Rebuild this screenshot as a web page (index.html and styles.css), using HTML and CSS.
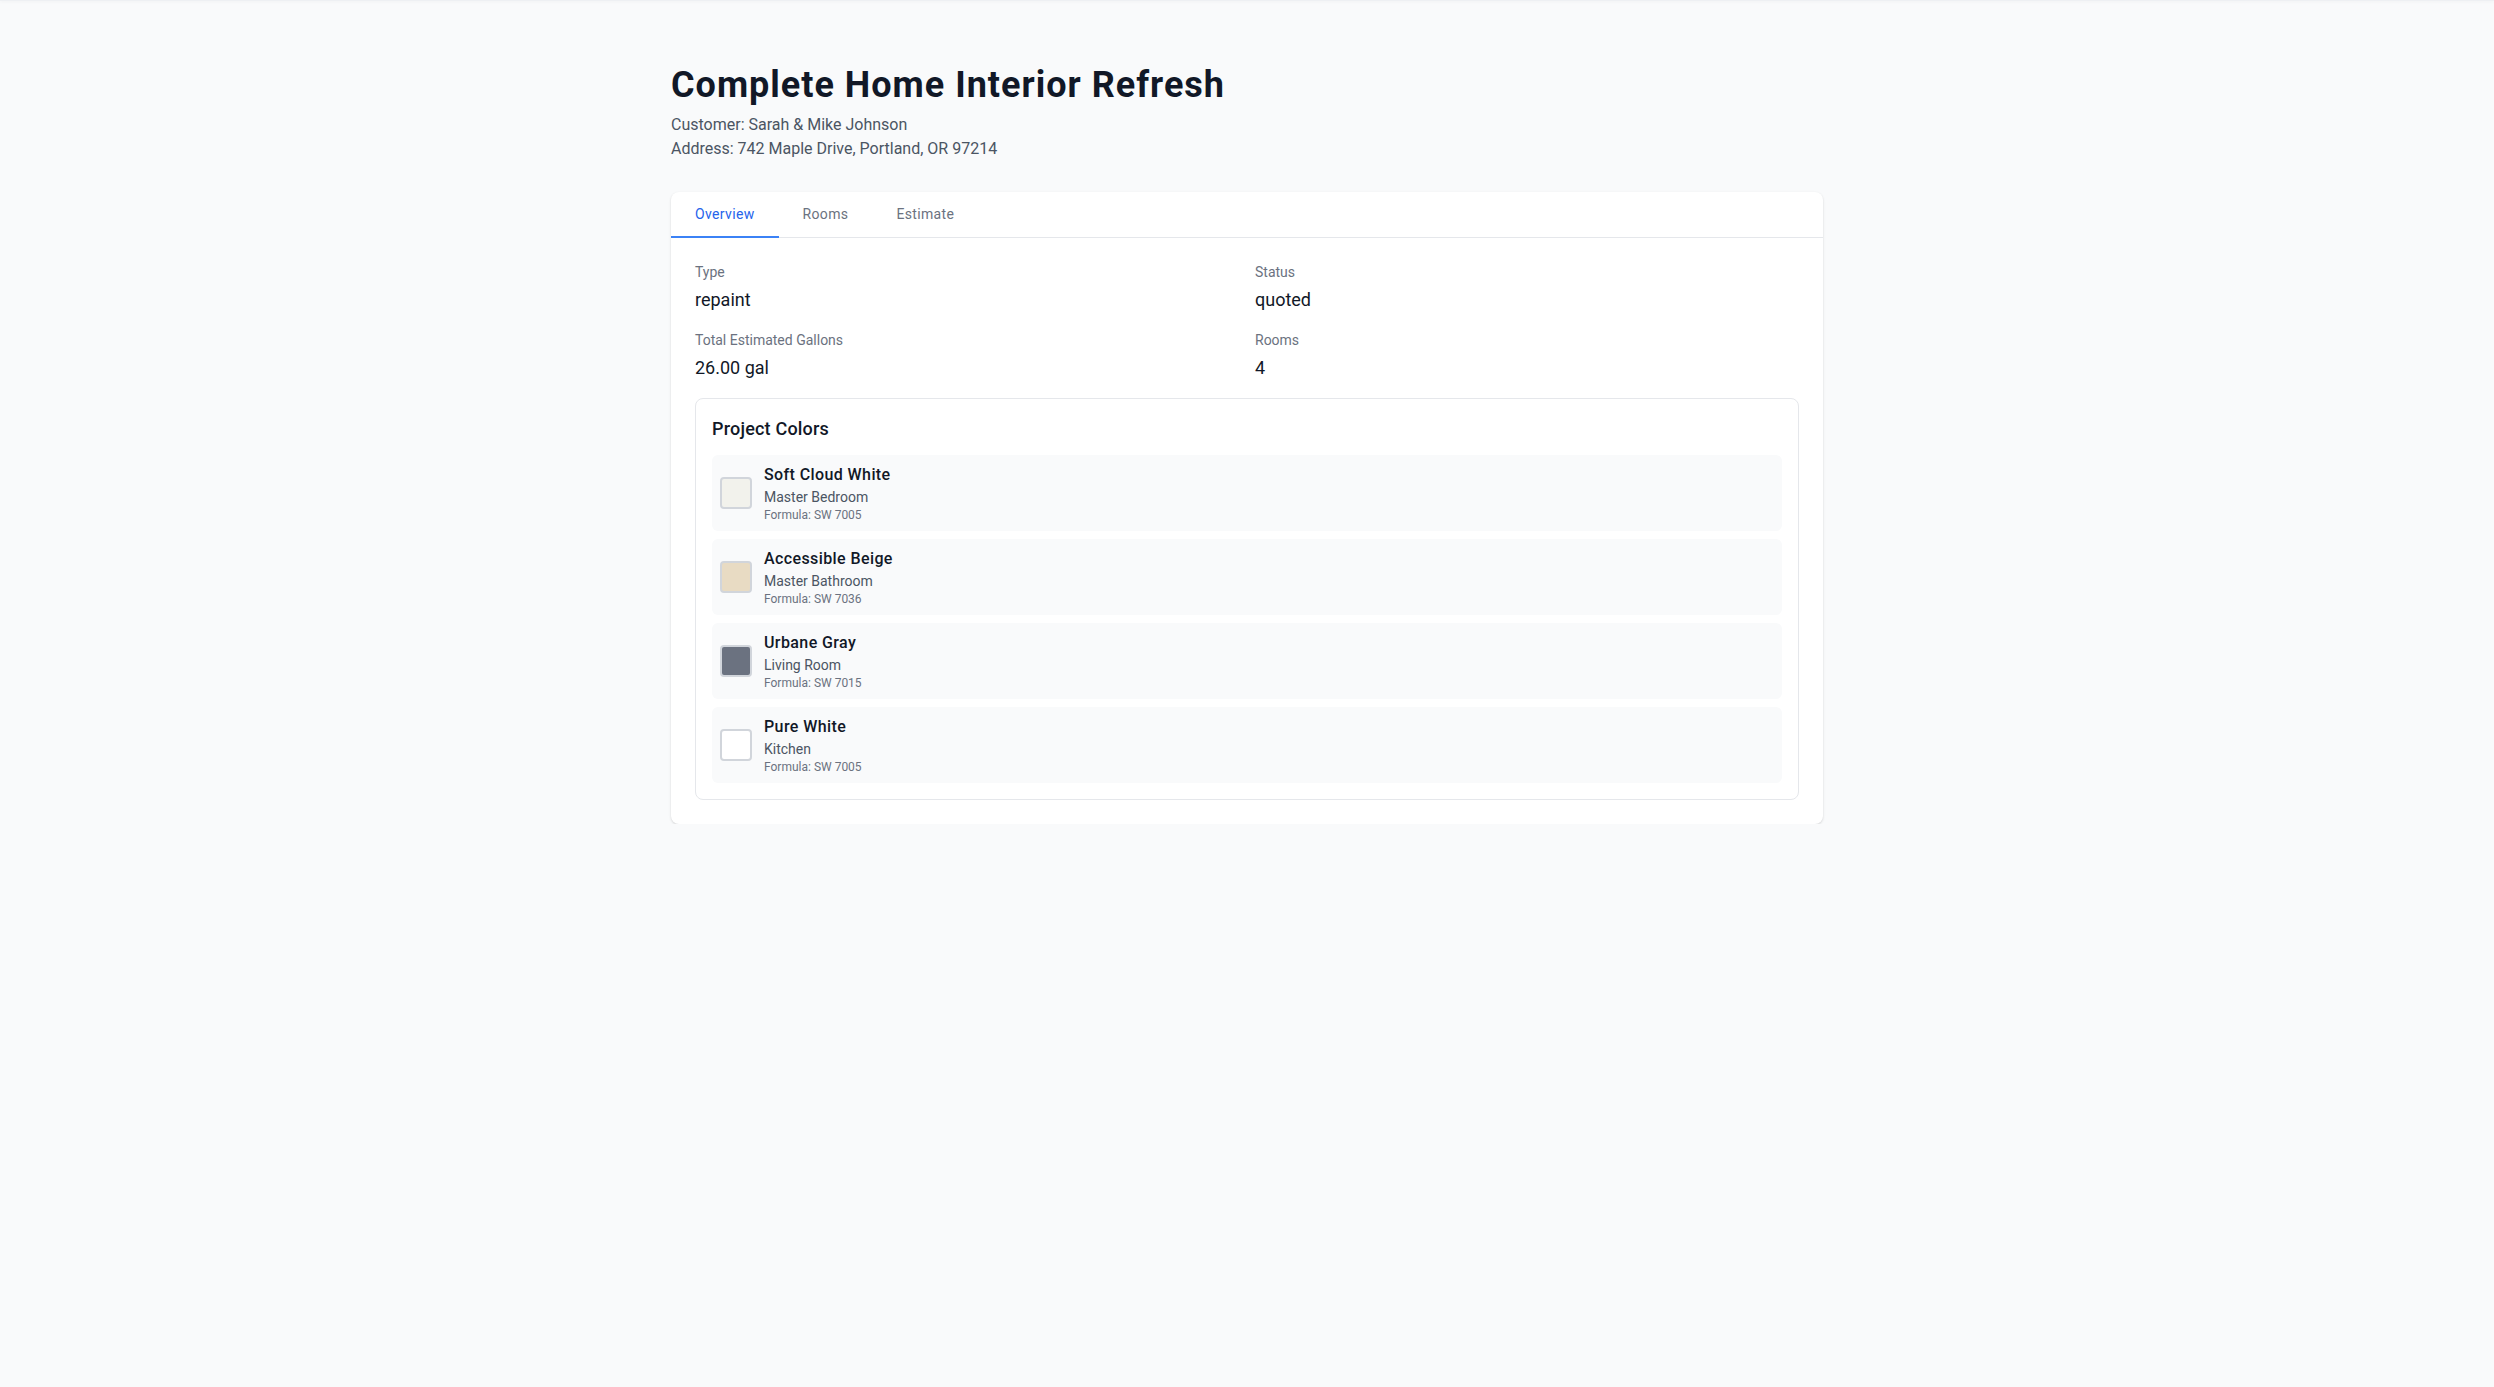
FILE: index.html
```html
<!DOCTYPE html>
<html lang="en">

<head>
    <meta charset="UTF-8">
    <meta name="viewport" content="width=device-width, initial-scale=1.0">
    <title>Complete Home Interior Refresh</title>
    <link rel="stylesheet" href="styles.css">
</head>

<body>
    <div class="topbar"></div>

    <main class="page">
        <h1 class="title">Complete Home Interior Refresh</h1>
        <p class="meta">Customer: Sarah &amp; Mike Johnson</p>
        <p class="meta">Address: 742 Maple Drive, Portland, OR 97214</p>

        <div class="card">
            <nav class="tabs">
                <button type="button" class="tab active">Overview</button>
                <button type="button" class="tab">Rooms</button>
                <button type="button" class="tab">Estimate</button>
            </nav>

            <div class="card-body">
                <div class="details">
                    <div>
                        <div class="label">Type</div>
                        <div class="value">repaint</div>
                    </div>
                    <div>
                        <div class="label">Status</div>
                        <div class="value">quoted</div>
                    </div>
                    <div>
                        <div class="label">Total Estimated Gallons</div>
                        <div class="value">26.00 gal</div>
                    </div>
                    <div>
                        <div class="label">Rooms</div>
                        <div class="value">4</div>
                    </div>
                </div>

                <section class="colors">
                    <h2 class="colors-title">Project Colors</h2>

                    <div class="color-list">
                        <div class="color-row">
                            <div class="swatch" style="background: #f2f2ec;"></div>
                            <div>
                                <div class="color-name">Soft Cloud White</div>
                                <div class="color-room">Master Bedroom</div>
                                <div class="color-formula">Formula: SW 7005</div>
                            </div>
                        </div>
                        <div class="color-row">
                            <div class="swatch" style="background: #e8dbc3;"></div>
                            <div>
                                <div class="color-name">Accessible Beige</div>
                                <div class="color-room">Master Bathroom</div>
                                <div class="color-formula">Formula: SW 7036</div>
                            </div>
                        </div>
                        <div class="color-row">
                            <div class="swatch" style="background: #6b7280;"></div>
                            <div>
                                <div class="color-name">Urbane Gray</div>
                                <div class="color-room">Living Room</div>
                                <div class="color-formula">Formula: SW 7015</div>
                            </div>
                        </div>
                        <div class="color-row">
                            <div class="swatch" style="background: #ffffff;"></div>
                            <div>
                                <div class="color-name">Pure White</div>
                                <div class="color-room">Kitchen</div>
                                <div class="color-formula">Formula: SW 7005</div>
                            </div>
                        </div>
                    </div>
                </section>
            </div>
        </div>
    </main>
</body>

</html>
```

FILE: styles.css
```css
* {
    box-sizing: border-box;
}

body {
    margin: 0;
    background: #f9fafb;
    color: #111827;
    font-family: Roboto, "Noto Sans", sans-serif;
}

.topbar {
    height: 1px;
    background: #eef0f3;
    box-shadow: 0 1px 3px rgba(0, 0, 0, 0.06);
}

.page {
    max-width: 1152px;
    margin: 0 auto;
    padding-top: 64px;
}

.title {
    margin: 0 0 8px;
    font-size: 36px;
    line-height: 40px;
    font-weight: 700;
    letter-spacing: 1px;
    color: #111827;
}

.meta {
    margin: 0;
    font-size: 16px;
    line-height: 24px;
    color: #4b5563;
}

.card {
    margin-top: 31px;
    background: #fff;
    border-radius: 8px;
    box-shadow: 0 1px 3px rgba(0, 0, 0, 0.1), 0 1px 2px rgba(0, 0, 0, 0.06);
}

.tabs {
    display: flex;
    border-bottom: 1px solid #e5e7eb;
}

.tab {
    margin-bottom: -1px;
    padding: 12px 24px;
    border: 0;
    border-bottom: 2px solid transparent;
    background: none;
    font-family: inherit;
    font-size: 14px;
    line-height: 20px;
    letter-spacing: 0.35px;
    color: #6b7280;
    cursor: pointer;
}

.tab.active {
    color: #2563eb;
    border-bottom-color: #3b82f6;
}

.card-body {
    padding: 24px;
}

.details {
    display: grid;
    grid-template-columns: 1fr 1fr;
    gap: 16px;
}

.label {
    font-size: 14px;
    line-height: 20px;
    color: #6b7280;
}

.value {
    margin-top: 4px;
    font-size: 18px;
    line-height: 28px;
    color: #111827;
}

.colors {
    margin-top: 16px;
    padding: 16px;
    border: 1px solid #e5e7eb;
    border-radius: 8px;
}

.colors-title {
    margin: 0 0 12px;
    font-size: 18px;
    line-height: 28px;
    font-weight: 500;
    letter-spacing: 0.2px;
}

.color-list {
    display: flex;
    flex-direction: column;
    gap: 8px;
}

.color-row {
    display: flex;
    align-items: center;
    gap: 12px;
    padding: 8px;
    background: #f9fafb;
    border-radius: 6px;
}

.swatch {
    width: 32px;
    height: 32px;
    border: 2px solid #d1d5db;
    border-radius: 4px;
}

.color-name {
    font-size: 16px;
    line-height: 24px;
    font-weight: 500;
    letter-spacing: 0.4px;
}

.color-room {
    font-size: 14px;
    line-height: 20px;
    color: #4b5563;
}

.color-formula {
    font-size: 12px;
    line-height: 16px;
    color: #6b7280;
}
```
